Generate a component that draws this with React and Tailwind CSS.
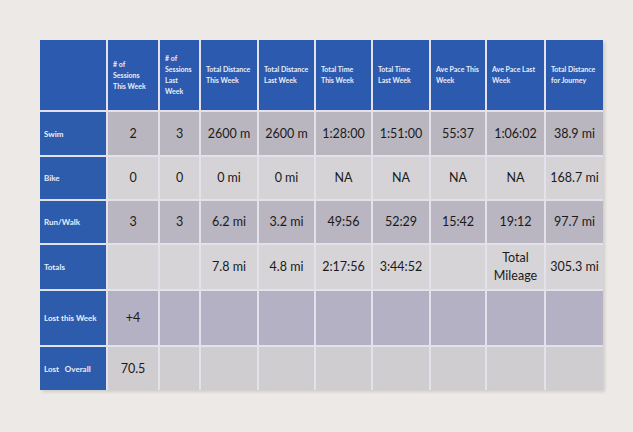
const headers = [
  "",
  ["# of", "Sessions", "This Week"],
  ["# of", "Sessions", "Last", "Week"],
  ["Total Distance", "This Week"],
  ["Total Distance", "Last Week"],
  ["Total Time", "This Week"],
  ["Total Time", "Last Week"],
  ["Ave Pace This", "Week"],
  ["Ave Pace Last", "Week"],
  ["Total Distance", "for Journey"],
];

const rows = [
  { label: "Swim", h: "h-[43px]", bg: "bg-[#bab6c0]", cells: ["2", "3", "2600 m", "2600 m", "1:28:00", "1:51:00", "55:37", "1:06:02", "38.9 mi"] },
  { label: "Bike", h: "h-[42px]", bg: "bg-[#d5d3d6]", cells: ["0", "0", "0 mi", "0 mi", "NA", "NA", "NA", "NA", "168.7 mi"] },
  { label: "Run/Walk", h: "h-[42px]", bg: "bg-[#b9b5c1]", cells: ["3", "3", "6.2 mi", "3.2 mi", "49:56", "52:29", "15:42", "19:12", "97.7 mi"] },
  { label: "Totals", h: "h-[44px]", bg: "bg-[#d6d4d7]", cells: ["", "", "7.8 mi", "4.8 mi", "2:17:56", "3:44:52", "", ["Total", "Mileage"], "305.3 mi"] },
  { label: "Lost this Week", h: "h-[54px]", bg: "bg-[#b5b1c5]", cells: ["+4", "", "", "", "", "", "", "", ""] },
  { label: "Lost   Overall", h: "h-[43px]", bg: "bg-[#cfcdd0]", cells: ["70.5", "", "", "", "", "", "", "", ""] },
];

const cols =
  "grid grid-cols-[66px_50px_39px_56px_55px_55px_56px_54px_57px_57px] gap-[2px]";

export default function App() {
  return (
    <div className="w-[633px] h-[432px] bg-[#ece9e6] pt-[40px] pl-[40px] font-['Lato','Noto_Sans',sans-serif]">
      <div className="w-[563px] flex flex-col gap-[2px] bg-[#e3e2ea] shadow-[2px_2px_3px_rgba(0,0,0,0.12)]">
        <div className={cols}>
          {headers.map((h, i) => (
            <div
              key={i}
              className="h-[70px] bg-[#2c5aae] flex flex-col justify-center pl-[5px] text-[7px] leading-[11px] font-bold text-[#e8eef9]"
            >
              {Array.isArray(h) && h.map((line) => <span key={line}>{line}</span>)}
            </div>
          ))}
        </div>
        {rows.map((r) => (
          <div key={r.label} className={cols}>
            <div
              className={`${r.h} bg-[#2d5cad] flex items-center pl-[4px] text-[8px] font-bold text-[#e8eef9] whitespace-pre`}
            >
              {r.label}
            </div>
            {r.cells.map((c, i) => (
              <div
                key={i}
                className={`${r.h} ${r.bg} flex flex-col items-center justify-center text-[12.5px] leading-[18px] text-[#1a1a1a]`}
              >
                {Array.isArray(c) ? c.map((l) => <span key={l}>{l}</span>) : c}
              </div>
            ))}
          </div>
        ))}
      </div>
    </div>
  );
}
